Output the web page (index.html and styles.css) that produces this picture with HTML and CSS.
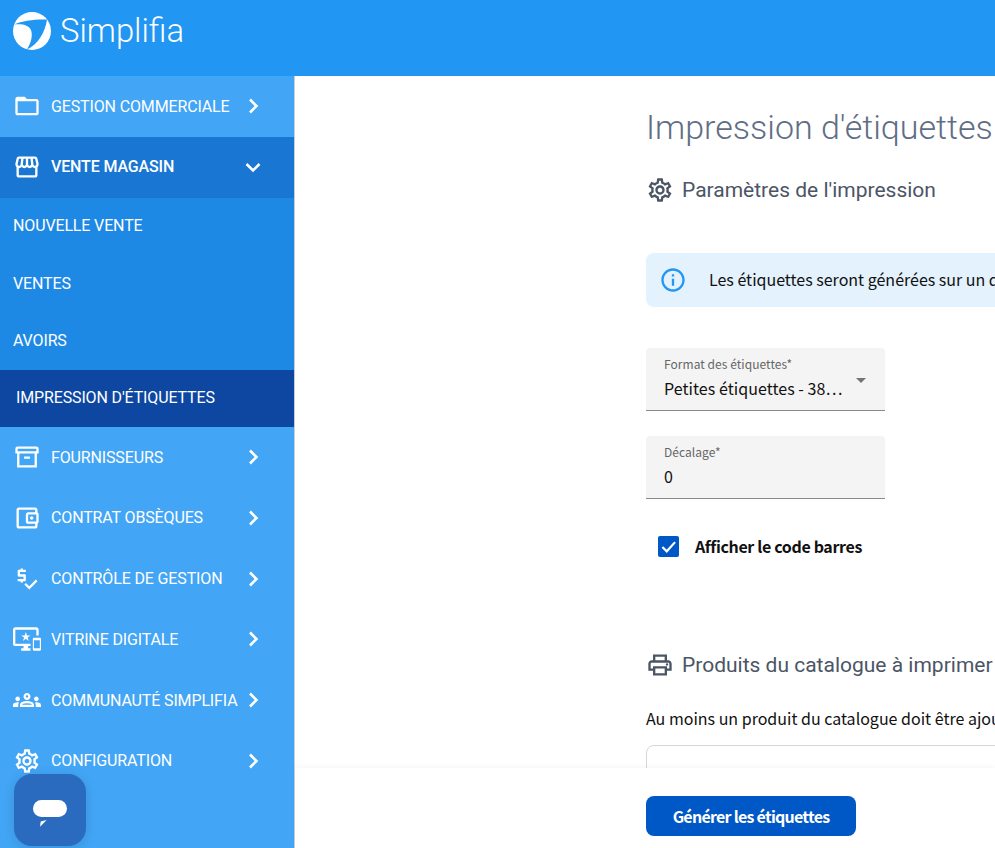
FILE: index.html
```html
<!DOCTYPE html>
<html lang="fr">
<head>
<meta charset="utf-8">
<title>Simplifia</title>
<link rel="stylesheet" href="styles.css">
</head>
<body>
<div class="app">
  <header class="topbar">
    <svg class="logo" viewBox="0 0 40 40"><circle cx="20" cy="20" r="19" fill="#fff"/><path d="M2.500 13.500C10 9.500 24 8 35 8.500C33 22 26 33 15 38.500C19 32 21 25 19 19C17 14 10 12.500 2.500 13.500Z" fill="#2196f3"/></svg>
    <span class="brand">Simplifia</span>
  </header>
  <div class="body">
    <nav class="sidebar">
      <a class="item"><svg class="ico" viewBox="0 0 24 24"><path d="M20 6h-8l-2-2H4c-1.100 0-1.990.9-1.990 2L2 18c0 1.100.9 2 2 2h16c1.100 0 2-.9 2-2V8c0-1.100-.9-2-2-2zm0 12H4V8h16v10z"/></svg><span class="label">GESTION COMMERCIALE</span><svg class="chev" viewBox="0 0 24 24"><path d="M9 5.500 15.500 12 9 18.500"/></svg></a>
      <a class="item open"><svg class="ico" viewBox="0 0 24 24"><path d="M21.900 8.890l-1.050-4.370c-.22-.9-1-1.520-1.910-1.520H5.050c-.9 0-1.690.63-1.900 1.520L2.100 8.890c-.24 1.020-.02 2.060.62 2.880.08.11.19.19.28.29V19c0 1.100.9 2 2 2h14c1.100 0 2-.9 2-2v-6.940c.09-.09.2-.18.28-.28.64-.82.87-1.870.62-2.890zm-2.990-3.900l1.050 4.370c.1.42.01.84-.25 1.170-.14.18-.44.47-.94.47-.61 0-1.140-.49-1.210-1.140L16.980 5l1.930-.01zM13 5h1.960l.54 4.520c.05.39-.07.78-.33 1.070-.22.26-.54.41-.95.41-.67 0-1.220-.59-1.220-1.310V5zM8.490 9.520L9.040 5H11v4.690c0 .72-.55 1.310-1.290 1.310-.34 0-.65-.15-.89-.41-.25-.29-.37-.68-.33-1.070zm-4.450-.16L5.050 5h1.970l-.58 4.860c-.08.65-.6 1.140-1.210 1.140-.49 0-.8-.29-.93-.47-.27-.32-.36-.75-.26-1.170zM5 19v-6.030c.08.01.15.03.23.03.87 0 1.660-.36 2.240-.95.6.6 1.400.95 2.310.95.87 0 1.650-.36 2.230-.93.59.57 1.390.93 2.290.93.84 0 1.640-.35 2.240-.95.58.59 1.370.95 2.240.95.08 0 .15-.02.23-.03V19H5z"/></svg><span class="label">VENTE MAGASIN</span><svg class="chev" viewBox="0 0 24 24"><path d="M5.500 9 12 15.500 18.500 9"/></svg></a>
      <div class="sub">
        <a class="subitem">NOUVELLE VENTE</a>
        <a class="subitem">VENTES</a>
        <a class="subitem">AVOIRS</a>
        <a class="subitem active">IMPRESSION D'ÉTIQUETTES</a>
      </div>
      <a class="item"><svg class="ico" viewBox="0 0 24 24"><path class="line" d="M4 4h16a1 1 0 0 1 1 1v3H3V5a1 1 0 0 1 1-1zM4.500 8v12h15V8M9.500 12.500h5"/></svg><span class="label">FOURNISSEURS</span><svg class="chev" viewBox="0 0 24 24"><path d="M9 5.500 15.500 12 9 18.500"/></svg></a>
      <a class="item"><svg class="ico" viewBox="0 0 24 24"><path d="M21 7.280V5c0-1.100-.9-2-2-2H5c-1.110 0-2 .9-2 2v14c0 1.100.89 2 2 2h14c1.100 0 2-.9 2-2v-2.280c.59-.35 1-.98 1-1.720V9c0-.74-.41-1.370-1-1.720zM20 9v6h-7V9h7zM5 19V5h14v2h-6c-1.100 0-2 .9-2 2v6c0 1.100.9 2 2 2h6v2H5z"/><circle cx="16" cy="12" r="1.500"/></svg><span class="label">CONTRAT OBSÈQUES</span><svg class="chev" viewBox="0 0 24 24"><path d="M9 5.500 15.500 12 9 18.500"/></svg></a>
      <a class="item"><svg class="ico" viewBox="0 0 24 24"><path d="M11 13V9c0-.55-.45-1-1-1H6V6h5V4H8.500V3h-2v1H5c-.55 0-1 .45-1 1v4c0 .55.45 1 1 1h4v2H4v2h2.500v1h2v-1H10c.55 0 1-.45 1-1zm8.590-.48l-5.660 5.650-2.830-2.830-1.410 1.420L13.930 21 21 13.930z"/></svg><span class="label">CONTRÔLE DE GESTION</span><svg class="chev" viewBox="0 0 24 24"><path d="M9 5.500 15.500 12 9 18.500"/></svg></a>
      <a class="item"><svg class="ico" viewBox="0 0 24 24"><path d="M23 11.010L18 11c-.55 0-1 .45-1 1v9c0 .55.45 1 1 1h5c.55 0 1-.45 1-1v-9c0-.55-.45-1-1-1zM23 20h-5v-7h5v7zM20 2H2C.89 2 0 2.890 0 4v12c0 1.100.89 2 2 2h7v2H7v2h8v-2h-2v-2h2v-2H2V4h18v5h2V4c0-1.110-.9-2-2-2zm-8.030 7L11 6l-.97 3H7l2.470 1.760-.94 2.910 2.470-1.800 2.470 1.800-.94-2.910L15 9h-3.030z"/></svg><span class="label">VITRINE DIGITALE</span><svg class="chev" viewBox="0 0 24 24"><path d="M9 5.500 15.500 12 9 18.500"/></svg></a>
      <a class="item"><svg class="ico" viewBox="0 0 24 24"><path d="M4 13c1.100 0 2-.9 2-2s-.9-2-2-2-2 .9-2 2 .9 2 2 2zm1.130 1.100c-.37-.06-.74-.1-1.130-.1-.99 0-1.930.21-2.780.58C.48 14.900 0 15.620 0 16.430V18h4.500v-1.610c0-.83.23-1.610.63-2.290zM20 13c1.100 0 2-.9 2-2s-.9-2-2-2-2 .9-2 2 .9 2 2 2zm4 3.430c0-.81-.48-1.530-1.220-1.850-.85-.37-1.790-.58-2.780-.58-.39 0-.76.04-1.130.1.4.68.63 1.460.63 2.290V18H24v-1.570zM12 12.750c1.630 0 3.070.39 4.240.9 1.080.48 1.760 1.560 1.760 2.730V18H6v-1.610c0-1.180.68-2.260 1.760-2.730 1.170-.52 2.610-.91 4.240-.91zM8 16h8c0-.4-.2-.55-.5-.68-1-.45-2.300-.57-3.500-.57s-2.500.12-3.500.57c-.3.13-.5.28-.5.68zM12 6c1.660 0 3 1.340 3 3s-1.340 3-3 3-3-1.340-3-3 1.340-3 3-3zm0 2c-.55 0-1 .45-1 1s.45 1 1 1 1-.45 1-1-.45-1-1-1z" fill-rule="evenodd"/></svg><span class="label">COMMUNAUTÉ SIMPLIFIA</span><svg class="chev" viewBox="0 0 24 24"><path d="M9 5.500 15.500 12 9 18.500"/></svg></a>
      <a class="item"><svg class="ico" viewBox="0 0 24 24"><path d="M19.430 12.980c.04-.32.07-.64.07-.98 0-.34-.03-.66-.07-.98l2.110-1.650c.19-.15.24-.42.12-.64l-2-3.460c-.09-.16-.26-.25-.44-.25-.06 0-.12.01-.17.03l-2.490 1c-.52-.4-1.080-.73-1.690-.98l-.38-2.650C14.460 2.180 14.250 2 14 2h-4c-.25 0-.46.18-.49.42l-.38 2.650c-.61.25-1.170.59-1.690.98l-2.490-1c-.06-.02-.12-.03-.18-.03-.17 0-.34.09-.43.25l-2 3.460c-.13.22-.07.49.12.64l2.110 1.650c-.04.32-.07.65-.07.98 0 .33.03.66.07.98l-2.110 1.650c-.19.15-.24.42-.12.64l2 3.460c.09.16.26.25.44.25.06 0 .12-.01.17-.03l2.490-1c.52.4 1.080.73 1.690.98l.38 2.650c.03.24.24.42.49.42h4c.25 0 .46-.18.49-.42l.38-2.650c.61-.25 1.170-.59 1.690-.98l2.490 1c.06.02.12.03.18.03.17 0 .34-.09.43-.25l2-3.460c.12-.22.07-.49-.12-.64l-2.110-1.650zm-1.980-1.710c.04.31.05.52.05.73 0 .21-.02.43-.05.73l-.14 1.130.89.7 1.080.84-.7 1.210-1.270-.51-1.040-.42-.9.68c-.43.32-.84.56-1.250.73l-1.060.43-.16 1.130-.2 1.350h-1.400l-.19-1.350-.16-1.130-1.060-.43c-.43-.18-.83-.41-1.230-.71l-.91-.7-1.060.43-1.270.51-.7-1.210 1.080-.84.89-.7-.14-1.130c-.03-.31-.05-.54-.05-.74s.02-.43.05-.73l.14-1.130-.89-.7-1.080-.84.7-1.210 1.270.51 1.040.42.9-.68c.43-.32.84-.56 1.250-.73l1.060-.43.16-1.130.2-1.350h1.390l.19 1.350.16 1.130 1.060.43c.43.18.83.41 1.230.71l.91.7 1.060-.43 1.270-.51.7 1.210-1.070.85-.89.7.14 1.130zM12 8c-2.210 0-4 1.790-4 4s1.790 4 4 4 4-1.790 4-4-1.790-4-4-4zm0 6c-1.100 0-2-.9-2-2s.9-2 2-2 2 .9 2 2-.9 2-2 2z"/></svg><span class="label">CONFIGURATION</span><svg class="chev" viewBox="0 0 24 24"><path d="M9 5.500 15.500 12 9 18.500"/></svg></a>
    </nav>
    <main class="main">
      <div class="content">
        <h1 class="title">Impression d'étiquettes</h1>
        <h2 class="section"><svg class="secico" viewBox="0 0 24 24"><path d="M19.430 12.980c.04-.32.07-.64.07-.98 0-.34-.03-.66-.07-.98l2.110-1.650c.19-.15.24-.42.12-.64l-2-3.460c-.09-.16-.26-.25-.44-.25-.06 0-.12.01-.17.03l-2.490 1c-.52-.4-1.080-.73-1.690-.98l-.38-2.650C14.460 2.180 14.250 2 14 2h-4c-.25 0-.46.18-.49.42l-.38 2.650c-.61.25-1.170.59-1.690.98l-2.490-1c-.06-.02-.12-.03-.18-.03-.17 0-.34.09-.43.25l-2 3.460c-.13.22-.07.49.12.64l2.110 1.650c-.04.32-.07.65-.07.98 0 .33.03.66.07.98l-2.110 1.650c-.19.15-.24.42-.12.64l2 3.460c.09.16.26.25.44.25.06 0 .12-.01.17-.03l2.490-1c.52.4 1.080.73 1.690.98l.38 2.650c.03.24.24.42.49.42h4c.25 0 .46-.18.49-.42l.38-2.650c.61-.25 1.170-.59 1.690-.98l2.490 1c.06.02.12.03.18.03.17 0 .34-.09.43-.25l2-3.460c.12-.22.07-.49-.12-.64l-2.110-1.650zm-1.980-1.710c.04.31.05.52.05.73 0 .21-.02.43-.05.73l-.14 1.130.89.7 1.080.84-.7 1.210-1.270-.51-1.040-.42-.9.68c-.43.32-.84.56-1.250.73l-1.060.43-.16 1.130-.2 1.350h-1.400l-.19-1.350-.16-1.130-1.060-.43c-.43-.18-.83-.41-1.230-.71l-.91-.7-1.060.43-1.270.51-.7-1.210 1.080-.84.89-.7-.14-1.130c-.03-.31-.05-.54-.05-.74s.02-.43.05-.73l.14-1.130-.89-.7-1.080-.84.7-1.210 1.270.51 1.040.42.9-.68c.43-.32.84-.56 1.250-.73l1.060-.43.16-1.130.2-1.350h1.390l.19 1.350.16 1.130 1.060.43c.43.18.83.41 1.230.71l.91.7 1.060-.43 1.270-.51.7 1.210-1.070.85-.89.7.14 1.130zM12 8c-2.210 0-4 1.790-4 4s1.790 4 4 4 4-1.790 4-4-1.790-4-4-4zm0 6c-1.100 0-2-.9-2-2s.9-2 2-2 2 .9 2 2-.9 2-2 2z"/></svg>Paramètres de l'impression</h2>
        <div class="notice"><svg class="infoico" viewBox="0 0 24 24"><path d="M11 7h2v2h-2zm0 4h2v6h-2zm1-9C6.480 2 2 6.480 2 12s4.480 10 10 10 10-4.480 10-10S17.520 2 12 2zm0 18c-4.410 0-8-3.590-8-8s3.590-8 8-8 8 3.590 8 8-3.590 8-8 8z"/></svg><span class="notice-text">Les étiquettes seront générées sur un document PDF au format A4</span></div>
        <div class="field select"><span class="flabel">Format des étiquettes*</span><span class="fvalue">Petites étiquettes - 38…</span><i class="caret"></i></div>
        <div class="field"><span class="flabel">Décalage*</span><span class="fvalue">0</span></div>
        <label class="check"><span class="box"><svg viewBox="0 0 24 24"><path d="M5 12.500 10 17.500 19.500 7"/></svg></span><span>Afficher le code barres</span></label>
        <h2 class="section second"><svg class="secico" viewBox="0 0 24 24"><path d="M19 8h-1V3H6v5H5c-1.660 0-3 1.340-3 3v6h4v4h12v-4h4v-6c0-1.660-1.340-3-3-3zM8 5h8v3H8V5zm8 12v2H8v-4h8v2zm2-2v-2H6v2H4v-4c0-.55.45-1 1-1h14c.55 0 1 .45 1 1v4h-2z"/><circle cx="18" cy="11.500" r="1"/></svg>Produits du catalogue à imprimer</h2>
        <p class="hint">Au moins un produit du catalogue doit être ajouté pour générer les étiquettes</p>
        <div class="table"></div>
      </div>
      <footer class="footer"><button class="primary">Générer les étiquettes</button></footer>
    </main>
  </div>
  <button class="chat" aria-label="Chat"><svg viewBox="0 0 72 72"><rect x="19" y="26" width="34" height="17" rx="8.500" fill="#fff"/><path d="M26.700 47.500 32.700 46 26 52.700z" fill="#fff"/></svg></button>
</div>
</body>
</html>
```
FILE: styles.css
```css
* { box-sizing: border-box; }
html, body { margin: 0; height: 100%; overflow: hidden; }
body { font-family: "Noto Sans CJK SC", "Noto Sans", sans-serif; color: #111; background: #fff; }
.app { height: 848px; display: flex; flex-direction: column; position: relative; }
.topbar { height: 76px; flex: none; background: #2196f3; display: flex; align-items: center; padding: 0 0 14px 12px; gap: 8px; }
.logo { width: 40px; height: 40px; }
.brand { font-family: Roboto, sans-serif; font-weight: 300; font-size: 32.800px; color: #fff; }
.body { flex: 1; display: flex; min-height: 0; }
.sidebar { width: 295px; flex: none; background: #42a5f5; border-right: 1px solid #c9ccd1; font-family: Roboto, sans-serif; color: #fff; font-size: 16px; font-weight: 400; letter-spacing: -.14px; }
.item { height: 60.750px; display: flex; align-items: center; padding: 0 0 .7px 13px; }
.item:nth-child(-n+2) { height: 61px; padding-bottom: 1px; }
.item.open { background: #1976d2; font-weight: 500; padding-bottom: 2px; }
.ico { width: 28px; height: 28px; fill: #fff; flex: none; margin-right: 10px; }
.ico .line { fill: none; stroke: #fff; stroke-width: 2; }
.label { width: 190px; flex: none; white-space: nowrap; }
.chev { width: 24px; height: 24px; fill: none; stroke: #fff; stroke-width: 2.600; }
.sub { background: #1e88e5; }
.subitem { height: 57.330px; display: flex; align-items: center; padding: 0 0 1.500px 13px; }
.subitem.active { height: 57px; background: #0d47a1; padding: 0 0 1px 16px; }
.main { flex: 1; min-width: 0; display: flex; flex-direction: column; }
.content { flex: 1; min-height: 0; overflow: hidden; padding: 28px 0 0 351px; }
.title { margin: 0; font-family: Roboto, sans-serif; font-weight: 300; font-size: 34px; line-height: 46px; color: #5f6e85; white-space: nowrap; }
.section { margin: 26px 0 0; display: flex; align-items: center; gap: 8px; font-family: Roboto, sans-serif; font-weight: 400; font-size: 21px; line-height: 28px; color: #4b5565; white-space: nowrap; }
.secico { width: 28px; height: 28px; fill: #4b5565; flex: none; }
.notice { margin-top: 49px; width: 800px; height: 54px; background: #e3f2fd; border-radius: 8px; display: flex; align-items: center; gap: 22px; padding-left: 13px; font-size: 16px; white-space: nowrap; }
.notice-text { position: relative; top: -1px; }
.infoico { width: 28px; height: 28px; fill: #2196f3; flex: none; }
.field { width: 239px; height: 63px; margin-top: 25px; background: #f4f4f4; border-bottom: 1px solid #8a8a8a; border-radius: 4px 4px 0 0; padding: 7px 18px 0; position: relative; display: flex; flex-direction: column; }
.flabel { font-size: 12px; line-height: 17px; color: #666; letter-spacing: .05px; }
.fvalue { font-size: 16px; line-height: 24px; margin-top: 4px; letter-spacing: .05px; }
.select { margin-top: 41px; }
.caret { position: absolute; right: 19px; top: 30px; border: 5.500px solid transparent; border-top-color: #757575; border-bottom: 0; }
.check { display: flex; align-items: center; gap: 16px; margin: 35px 0 0 12px; font-weight: 700; font-size: 16px; letter-spacing: -.35px; }
.box { width: 21px; height: 21px; background: #0058c7; border-radius: 2px; display: flex; }
.box svg { fill: none; stroke: #fff; stroke-width: 2.500; }
.second { margin-top: 93px; }
.hint { margin: 27px 0 0; font-size: 16px; line-height: 24px; white-space: nowrap; }
.table { margin-top: 15px; width: 800px; height: 60px; border: 1px solid #d5d7de; border-radius: 8px; }
.footer { height: 80px; flex: none; background: #fff; position: relative; box-shadow: 0 -2px 5px rgba(0,0,0,.03); padding: 28px 0 0 351px; }
.primary { width: 210px; height: 40px; background: #0058c7; color: #fff; border: 0; border-radius: 8px; font-family: inherit; font-weight: 700; font-size: 16px; letter-spacing: -.75px; }
.chat { position: absolute; left: 14px; top: 774px; width: 72px; height: 72px; padding: 0; border: 0; border-radius: 18px; background: #2a6bbf; box-shadow: 0 2px 12px rgba(0,0,0,.12); }
.chat svg { display: block; width: 72px; height: 72px; }
```
